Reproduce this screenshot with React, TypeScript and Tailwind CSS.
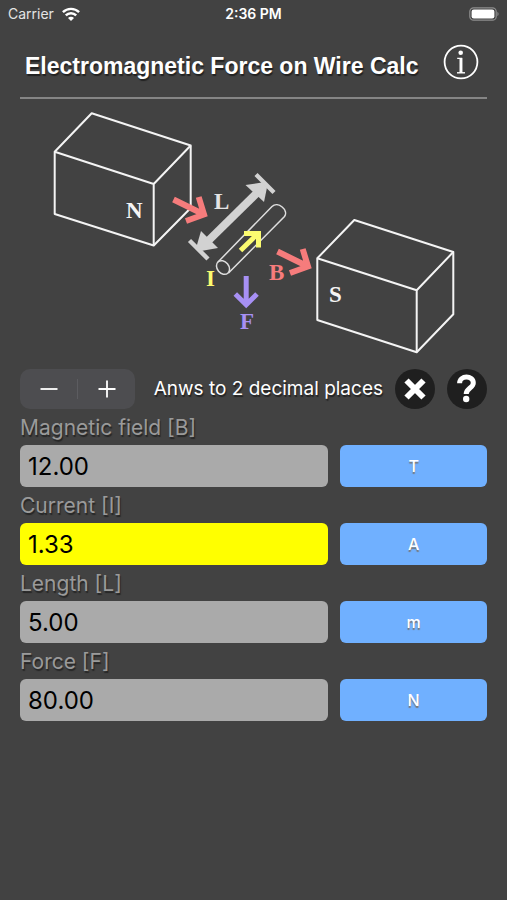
import { useState } from "react";

type Field = {
  id: string;
  label: string;
  unit: string;
  value: string;
  solved?: boolean;
};

const initialFields: Field[] = [
  { id: "field", label: "Magnetic field [B]", unit: "T", value: "12.00" },
  { id: "current", label: "Current [I]", unit: "A", value: "1.33", solved: true },
  { id: "length", label: "Length [L]", unit: "m", value: "5.00" },
  { id: "force", label: "Force [F]", unit: "N", value: "80.00" },
];

function StatusBar() {
  return (
    <div className="grid h-7 grid-cols-3 items-center px-2 text-sm text-white">
      <div className="flex items-center gap-2 text-[#e4e4e4]">
        <span>Carrier</span>
        <svg className="h-[14px] w-[18px]" viewBox="0 0 18 14" fill="none" stroke="white" strokeWidth="2.4">
          <path d="M0.9 5.2a11.6 11.6 0 0 1 16.2 0" />
          <path d="M3.8 8.4a7.2 7.2 0 0 1 10.4 0" />
          <path d="M9 14L6 11a4 4 0 0 1 6 0z" fill="white" stroke="none" />
        </svg>
      </div>
      <span className="text-center font-semibold">2:36 PM</span>
      <svg className="h-[14px] w-[30px] justify-self-end" viewBox="0 0 30 14" fill="none">
        <rect x="0.8" y="0.8" width="26.4" height="12.4" rx="3.8" stroke="#8e8e8e" strokeWidth="1.2" />
        <rect x="2.6" y="2.6" width="22.8" height="8.8" rx="2.2" fill="white" />
        <path d="M28.4 4.8v4.4c1.6-.7 1.6-3.7 0-4.4z" fill="#8e8e8e" />
      </svg>
    </div>
  );
}

function Header() {
  return (
    <header className="flex h-[71px] items-center justify-between border-b-2 border-[#858585] pr-2 pl-[5px]">
      <h1 className="pt-2 text-[23px] font-bold whitespace-nowrap text-white [font-family:'Liberation_Sans',Arial,sans-serif] [text-shadow:1px_2px_1px_#222]">
        Electromagnetic Force on Wire Calc
      </h1>
      <button type="button" aria-label="Info" className="mb-0.5 shrink-0">
        <svg className="h-9 w-9" viewBox="0 0 36 36" fill="none" stroke="white">
          <circle cx="18" cy="18" r="16.4" strokeWidth="1.8" />
          <circle cx="17.7" cy="8.7" r="2.3" fill="white" stroke="none" />
          <path d="M14.2 14.4h4.4v14" strokeWidth="1.2" />
          <path d="M17.9 14v15" strokeWidth="2.8" />
          <path d="M14 28.8h8" strokeWidth="1.4" />
        </svg>
      </button>
    </header>
  );
}

function ForceDiagram() {
  return (
    <svg
      className="w-full"
      viewBox="20 99 467 270"
      fill="none"
      role="img"
      aria-label="Wire between the poles of a magnet"
    >
      {/* magnet poles */}
      <g stroke="#f4f4f4" strokeWidth="2" strokeLinejoin="round">
        <path d="M54.7 151.7L91.7 113.3L190.7 145.5V208L153.7 245.5L54.7 214z" />
        <path d="M54.7 151.7L153.7 184V245.5M153.7 184L190.7 145.5" />
        <path d="M317.3 258.3L354.3 220L453.3 252V314.3L416.7 352.3L317.3 320z" />
        <path d="M317.3 258.3L416.7 290.3V352.3M416.7 290.3L453.3 252" />
      </g>

      {/* wire length */}
      <g stroke="#d2d2d2" fill="#d2d2d2">
        <path d="M256 174.5L274 192.5M189.5 240.5L208 259" strokeWidth="4.4" />
        <path d="M204 245L260 190" strokeWidth="8" />
        <path d="M245.5 185L262 182.5L267 187.5L264 202z" stroke="none" />
        <path d="M201 231L218 248L201 251L196.5 246.5z" stroke="none" />
      </g>

      {/* wire */}
      <g stroke="#dedede" strokeWidth="1.5">
        <ellipse cx="223" cy="267.5" rx="7.5" ry="5.8" transform="rotate(50 223 267.5)" />
        <path d="M218 262L272 206.5C278 201 289 210 284.5 216.5L228.5 273" />
      </g>

      {/* field, current and force directions */}
      <path
        d="M173.5 199.5L204 214.5M198.7 197L204 214.5L186 221M277.5 251.5L308 266.5M302.7 249L308 266.5L290 273"
        stroke="#f67c7c"
        strokeWidth="6"
      />
      <path d="M240.5 250.5L258 233.5M244 233.5H258.5V247.5" stroke="#fbfb70" strokeWidth="5" />
      <path d="M246.2 276V304M235.3 294L246.2 304.8L257 294" stroke="#a790f4" strokeWidth="5" />

      <g className="text-[23px] font-bold [font-family:'Liberation_Serif','Times_New_Roman',serif]">
        <text x="126" y="218" fill="#f4f4f4">N</text>
        <text x="214" y="209" fill="#e4e4e4">L</text>
        <text x="206" y="286" fill="#fbfb70">I</text>
        <text x="269" y="280" fill="#f67c7c">B</text>
        <text x="240" y="329" fill="#a790f4">F</text>
        <text x="329" y="302" fill="#f4f4f4">S</text>
      </g>
    </svg>
  );
}

export default function App() {
  const [fields, setFields] = useState(initialFields);
  const [places, setPlaces] = useState(2);

  const changePlaces = (next: number) => {
    if (next < 0 || next > 9) return;
    setPlaces(next);
    setFields(fields.map((f) => (f.value ? { ...f, value: Number(f.value).toFixed(next) } : f)));
  };

  const clearAll = () => setFields(fields.map((f) => ({ ...f, value: "", solved: false })));

  const setValue = (id: string, value: string) =>
    setFields(fields.map((f) => (f.id === id ? { ...f, value } : f)));

  return (
    <div className="min-h-screen bg-[#424242] [font-family:Inter,'Liberation_Sans',sans-serif]">
      <StatusBar />
      <main className="px-5">
        <Header />
        <ForceDiagram />

        <div className="flex items-center gap-3">
          <div className="flex h-10 w-[115px] shrink-0 items-center rounded-[10px] bg-[#4d4d50] text-white">
            <button
              type="button"
              aria-label="Fewer decimal places"
              className="flex flex-1 justify-center"
              onClick={() => changePlaces(places - 1)}
            >
              <svg className="h-5 w-5" viewBox="0 0 20 20" stroke="currentColor" strokeWidth="1.8">
                <path d="M1.5 10h17" />
              </svg>
            </button>
            <span className="h-5 w-px bg-[#5c5c60]" />
            <button
              type="button"
              aria-label="More decimal places"
              className="flex flex-1 justify-center"
              onClick={() => changePlaces(places + 1)}
            >
              <svg className="h-5 w-5" viewBox="0 0 20 20" stroke="currentColor" strokeWidth="1.8">
                <path d="M1.5 10h17M10 1.5v17" />
              </svg>
            </button>
          </div>
          <p className="ml-auto text-[19px] whitespace-nowrap text-white [text-shadow:1px_2px_1px_#222]">
            Anws to {places} decimal places
          </p>
          <button type="button" aria-label="Clear" className="shrink-0" onClick={clearAll}>
            <svg className="h-10 w-10" viewBox="0 0 40 40" fill="none">
              <circle cx="20" cy="20" r="20" fill="#1f1f1f" />
              <path d="M11.5 11.5L28.5 28.5M28.5 11.5L11.5 28.5" stroke="white" strokeWidth="6" />
            </svg>
          </button>
          <button type="button" aria-label="Help" className="shrink-0">
            <svg className="h-10 w-10" viewBox="0 0 40 40" fill="none">
              <circle cx="20" cy="20" r="20" fill="#1f1f1f" />
              <path
                d="M12.6 14.2C12.6 6 26.3 6 26.3 13.9C26.3 19 19.2 19 19.2 25"
                stroke="white"
                strokeWidth="5"
              />
              <circle cx="19.2" cy="30" r="3.2" fill="white" />
            </svg>
          </button>
        </div>

        {fields.map((f) => (
          <div key={f.id}>
            <label
              htmlFor={f.id}
              className="flex h-9 items-center pt-0.5 text-[21px] text-[#9a9a9a] [text-shadow:1px_2px_1px_#262626]"
            >
              {f.label}
            </label>
            <div className="grid grid-cols-[21fr_10fr] gap-3">
              <input
                id={f.id}
                type="text"
                inputMode="decimal"
                value={f.value}
                onChange={(e) => setValue(f.id, e.target.value)}
                className={`h-[42px] w-full min-w-0 rounded-md px-2 text-2xl text-black outline-none ${
                  f.solved ? "bg-[#ffff00]" : "bg-[#aaaaaa]"
                }`}
              />
              <button
                type="button"
                className="rounded-md bg-[#70b0ff] text-base font-medium text-white [text-shadow:0px_2px_1px_#777]"
              >
                {f.unit}
              </button>
            </div>
          </div>
        ))}
      </main>
    </div>
  );
}
